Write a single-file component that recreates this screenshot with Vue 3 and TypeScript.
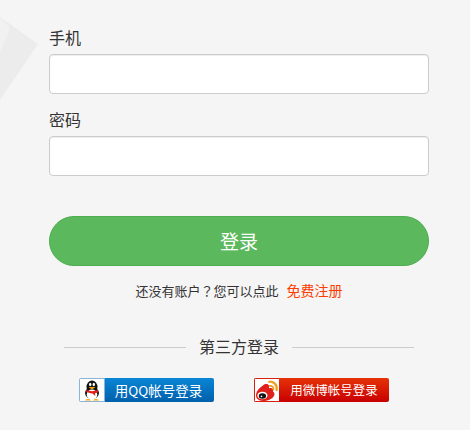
<script setup lang="ts">
const fields = [
  { label: '手机', type: 'text' },
  { label: '密码', type: 'password' },
]
</script>

<template>
  <div class="login">
    <svg class="bg-shape" width="40" height="105" viewBox="0 0 40 105" aria-hidden="true">
      <path d="M0 17 L38 44 L0 100 Z" fill="#ececec" />
      <path d="M0 18 L10 28 L0 52 Z" fill="#f1f1f1" />
    </svg>
    <form class="form" @submit.prevent>
      <div v-for="f in fields" :key="f.label" class="field">
        <label class="field-label">{{ f.label }}</label>
        <input class="field-input" :type="f.type" />
      </div>
      <button class="submit" type="submit">登录</button>
      <p class="register">还没有账户<span class="register-mark">？</span>您可以点此<a class="register-link">免费注册</a></p>
      <div class="divider">
        <span class="divider-line"></span>
        <span class="divider-text">第三方登录</span>
        <span class="divider-line"></span>
      </div>
      <div class="socials">
        <a class="social social-qq">
          <span class="social-icon">
            <svg width="18" height="21" viewBox="0 0 18 21">
              <ellipse cx="9" cy="7" rx="5.500" ry="6.500" fill="#111" />
              <ellipse cx="9" cy="13" rx="7" ry="6" fill="#111" />
              <ellipse cx="9" cy="14.500" rx="5.300" ry="5" fill="#fff" />
              <ellipse cx="7.200" cy="4.500" rx="1.200" ry="1.700" fill="#fff" />
              <ellipse cx="10.800" cy="4.500" rx="1.200" ry="1.700" fill="#fff" />
              <path d="M5.500 7h7L9 9.500z" fill="#f5a800" />
              <path d="M3 10c4 1.500 8 1.500 12 0v2.200c-1 .6-2 .9-3 1l.3 2.700-2.800-2.500c-2.500 0-5-.8-6.500-1.800z" fill="#e0201c" />
              <path d="M2 20.500c1.500-2 4.500-2 6 0zM10 20.500c1.500-2 4.500-2 6 0z" fill="#f5a800" />
            </svg>
          </span>
          <span class="social-text">用QQ帐号登录</span>
        </a>
        <a class="social social-weibo">
          <span class="social-icon">
            <svg width="24" height="22" viewBox="0 0 25 24">
              <path d="M8 7C12 4 16 6 14.500 10C18 9 20 10.500 19 13.500C21 14.500 21 17 20 18.500C18 22 13 24 8 24C3 24 0 21 .5 17C1 13 4 9.500 8 7Z" fill="#e0201c" />
              <ellipse cx="7.500" cy="18" rx="5.500" ry="4.200" fill="#fff" />
              <ellipse cx="7.500" cy="18.500" rx="4" ry="3" fill="#111" />
              <circle cx="6.500" cy="19" r=".9" fill="#fff" />
              <path d="M15 3C20 2 24 7 23 12" fill="none" stroke="#f0a020" stroke-width="2.500" stroke-linecap="round" />
              <path d="M15.500 7.500C18 7 20 9 19.500 11.500" fill="none" stroke="#f0a020" stroke-width="2" stroke-linecap="round" />
            </svg>
          </span>
          <span class="social-text social-text-small">用微博帐号登录</span>
        </a>
      </div>
    </form>
  </div>
</template>

<style>
html, body { margin: 0; background: #f5f5f5; }
</style>

<style scoped>
.login {
  position: relative;
  width: 470px;
  height: 430px;
  overflow: hidden;
  background: #f5f5f5;
  font-family: "Noto Sans CJK SC", "Liberation Sans", sans-serif;
  color: #333;
}
.bg-shape {
  position: absolute;
  left: 0;
  top: 0;
}
.form {
  position: relative;
  width: 380px;
  margin-left: 49px;
  padding-top: 25px;
  display: flex;
  flex-direction: column;
}
.field {
  display: flex;
  flex-direction: column;
  gap: 5px;
  margin-bottom: 13px;
}
.field-label {
  font-size: 16px;
  line-height: 24px;
}
.field-input {
  box-sizing: border-box;
  height: 40px;
  width: 100%;
  border: 1px solid #ccc;
  border-radius: 4px;
  background: #fff;
  box-shadow: inset 0 1px 1px rgba(0, 0, 0, 0.075);
  padding: 6px 12px;
}
.submit {
  height: 50px;
  margin-top: 27px;
  padding: 0 0 2px;
  border: 1px solid #4cae4c;
  border-radius: 25px;
  background: #5cb85c;
  color: #fff;
  font-family: inherit;
  font-size: 19px;
}
.register {
  height: 20px;
  margin: 14px 0 0;
  font-size: 13px;
  line-height: 20px;
  text-align: center;
}
.register-mark {
  font-family: "Noto Sans CJK TC", sans-serif;
}
.register-link {
  margin-left: 8px;
  font-size: 14px;
  color: #ff3c00;
}
.divider {
  display: flex;
  align-items: center;
  justify-content: center;
  gap: 13px;
  margin-top: 36px;
}
.divider-line {
  width: 122px;
  height: 1px;
  background: #ccc;
}
.divider-text {
  padding-bottom: 2px;
  font-size: 16px;
  line-height: 20px;
}
.socials {
  display: flex;
  gap: 40px;
  margin: 20px 0 0 30px;
}
.social {
  display: flex;
  width: 135px;
  height: 24px;
  box-sizing: border-box;
  border-radius: 2px;
  overflow: hidden;
  color: #fff;
}
.social-icon {
  flex: none;
  display: flex;
  align-items: center;
  justify-content: center;
  box-sizing: border-box;
  width: 25px;
  background: #fff;
}
.social-qq .social-icon {
  width: 26px;
  border: 1px solid #8db4d6;
}
.social-weibo .social-icon {
  border: 1px solid #d8200c;
  border-right: 0;
}
.social-text {
  flex: 1;
  text-align: center;
  font-size: 13.500px;
  line-height: 24px;
}
.social-qq .social-text {
  padding-right: 2px;
}
.social-text-small {
  font-size: 12.500px;
}
.social-qq .social-text {
  background: linear-gradient(#0a85d6, #0060ac);
}
.social-weibo .social-text {
  background: linear-gradient(#e63208, #c80000);
}
</style>
